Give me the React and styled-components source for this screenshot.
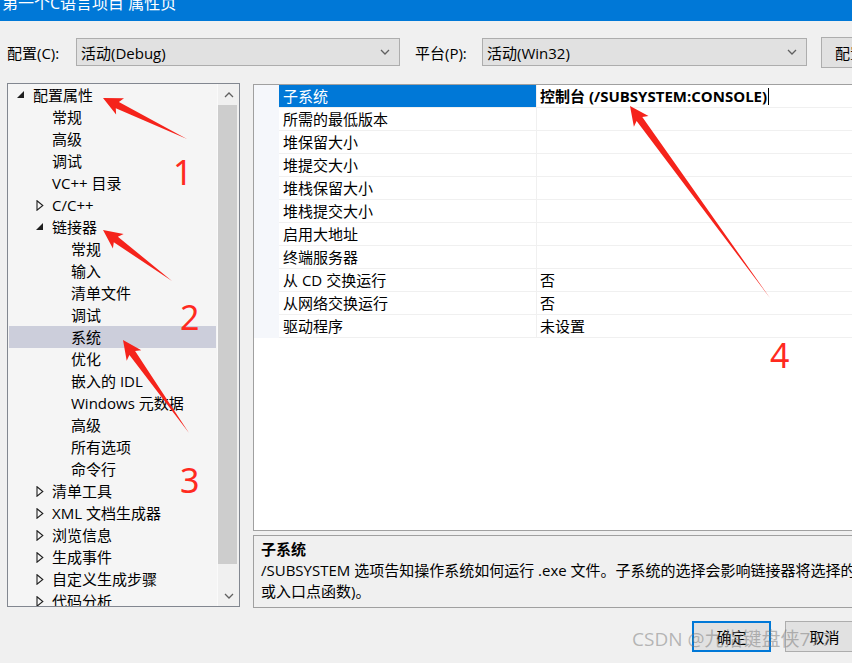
import React from "react";
import styled, { createGlobalStyle } from "styled-components";

const GlobalStyle = createGlobalStyle`
    html, body {
        margin: 0;
        padding: 0;
        background: #f0f0f0;
        overflow: hidden;
    }
    body {
        font-family: "Open Sans", "Noto Sans CJK SC", sans-serif;
    }
`;

const Window = styled.div`
    position: relative;
    width: 852px;
    height: 663px;
    overflow: hidden;
    background: #f0f0f0;
    display: flex;
    flex-direction: column;
    font-size: 15px;
    color: #000;
`;

const TitleBar = styled.div`
    height: 21px;
    flex-shrink: 0;
    background: #0078d7;
    color: #fff;
    font-size: 16px;
    line-height: 16px;
    padding-left: 2px;
    overflow: hidden;
    white-space: nowrap;
`;
const TitleText = styled.div`
    margin-top: -5px;
`;

const ConfigRow = styled.div`
    display: flex;
    align-items: center;
    height: 28px;
    padding: 17px 0 17px 7px;
    flex-shrink: 0;
    white-space: nowrap;
`;
const Label = styled.div`
    width: ${({ w }) => w}px;
    margin-left: ${({ ml }) => ml || 0}px;
    flex-shrink: 0;
`;
const Select = styled.div`
    width: ${({ w }) => w}px;
    height: 28px;
    box-sizing: border-box;
    border: 1px solid #adadad;
    background: #e1e1e1;
    display: flex;
    align-items: center;
    justify-content: space-between;
    padding: 0 9px 0 4px;
    flex-shrink: 0;
`;
const TopButton = styled.div`
    margin-left: 14px;
    width: 140px;
    height: 31px;
    box-sizing: border-box;
    border: 1px solid #adadad;
    background: #e1e1e1;
    display: flex;
    align-items: center;
    padding-left: 13px;
    flex-shrink: 0;
`;

const Main = styled.div`
    display: flex;
    align-items: flex-start;
    padding-left: 7px;
    height: 524px;
    flex-shrink: 0;
`;

const Tree = styled.div`
    width: 233px;
    height: 524px;
    box-sizing: border-box;
    border: 1px solid #828790;
    background: #f5f5f5;
    display: flex;
    flex-shrink: 0;
`;
const TreeList = styled.div`
    flex: 1;
    overflow: hidden;
    padding: 0 1px;
`;
const TreeRow = styled.div`
    display: flex;
    align-items: center;
    height: 22px;
    line-height: 22px;
    padding-left: ${({ level }) => 8 + level * 19}px;
    background: ${({ selected }) => (selected ? "#cccedb" : "transparent")};
    white-space: nowrap;
`;
const Expander = styled.span`
    width: 16px;
    height: 22px;
    display: flex;
    align-items: center;
    flex-shrink: 0;
`;

const ScrollBar = styled.div`
    width: 21px;
    background: #f0f0f0;
    display: flex;
    flex-direction: column;
    border-left: 1px solid #fafafa;
`;
const ScrollButton = styled.div`
    height: 21px;
    display: flex;
    align-items: center;
    justify-content: center;
`;
const Thumb = styled.div`
    height: 459px;
    margin-right: 2px;
    background: #cdcdcd;
`;
const Track = styled.div`
    flex: 1;
`;

const RightCol = styled.div`
    margin-left: 13px;
    margin-top: 1px;
    width: 720px;
    flex-shrink: 0;
    display: flex;
    flex-direction: column;
`;
const Grid = styled.div`
    height: 447px;
    box-sizing: border-box;
    border: 1px solid #a0a0a0;
    background: #fff;
`;
const GridRow = styled.div`
    display: flex;
    height: 23px;
    line-height: 22px;
    white-space: nowrap;
`;
const Gutter = styled.div`
    width: 25px;
    background: #f5f7fb;
    flex-shrink: 0;
`;
const NameCell = styled.div`
    width: 258px;
    box-sizing: border-box;
    padding-left: 4px;
    border-bottom: 1px solid #f0f0f0;
    border-right: 1px solid #f0f0f0;
    background: ${({ selected }) => (selected ? "#0078d7" : "#fff")};
    color: ${({ selected }) => (selected ? "#fff" : "#000")};
    flex-shrink: 0;
`;
const ValueCell = styled.div`
    flex: 1;
    padding-left: 3px;
    border-bottom: 1px solid #f0f0f0;
    font-weight: ${({ bold }) => (bold ? 700 : 400)};
    display: flex;
    align-items: center;
`;
const Caret = styled.span`
    width: 1px;
    height: 17px;
    margin-left: 1px;
    background: #000;
`;

const Description = styled.div`
    margin-top: 4px;
    height: 73px;
    box-sizing: border-box;
    border: 1px solid #a0a0a0;
    background: #f0f0f0;
    padding: 3px 7px;
    line-height: 21px;
    white-space: nowrap;
    overflow: hidden;
`;
const DescTitle = styled.div`
    font-weight: 700;
`;

const ButtonRow = styled.div`
    display: flex;
    gap: 14px;
    padding: 14px 0 0 692px;
`;
const Button = styled.div`
    width: 79px;
    height: 31px;
    box-sizing: border-box;
    border: ${({ primary }) => (primary ? "2px solid #0078d7" : "1px solid #adadad")};
    background: #e1e1e1;
    display: flex;
    align-items: center;
    justify-content: center;
    flex-shrink: 0;
`;

const Watermark = styled.div`
    position: absolute;
    left: 632px;
    top: 624px;
    font-size: 19px;
    color: rgba(120, 120, 120, 0.5);
    white-space: nowrap;
    pointer-events: none;
`;

const Overlay = styled.svg`
    position: absolute;
    left: 0;
    top: 0;
    pointer-events: none;
`;

const Chevron = ({ up }) => (
    <svg width="10" height="6" viewBox="0 0 10 6">
        <polyline
            points={up ? "1,5 5,1 9,5" : "1,1 5,5 9,1"}
            fill="none"
            stroke="#606060"
            strokeWidth="1.3"
        />
    </svg>
);

const Triangle = ({ open }) =>
    open ? (
        <svg width="8" height="8" viewBox="0 0 8 8">
            <polygon points="7,0 7,7 0,7" fill="#1e1e1e" />
        </svg>
    ) : (
        <svg width="8" height="11" viewBox="0 0 8 11">
            <polygon points="1,0.8 6.8,5.5 1,10.2" fill="none" stroke="#1e1e1e" strokeWidth="1.1" />
        </svg>
    );

const treeItems = [
    [0, "配置属性", "open"],
    [1, "常规"],
    [1, "高级"],
    [1, "调试"],
    [1, "VC++ 目录"],
    [1, "C/C++", "closed"],
    [1, "链接器", "open"],
    [2, "常规"],
    [2, "输入"],
    [2, "清单文件"],
    [2, "调试"],
    [2, "系统", null, true],
    [2, "优化"],
    [2, "嵌入的 IDL"],
    [2, "Windows 元数据"],
    [2, "高级"],
    [2, "所有选项"],
    [2, "命令行"],
    [1, "清单工具", "closed"],
    [1, "XML 文档生成器", "closed"],
    [1, "浏览信息", "closed"],
    [1, "生成事件", "closed"],
    [1, "自定义生成步骤", "closed"],
    [1, "代码分析", "closed"],
];

const props = [
    ["子系统", "控制台 (/SUBSYSTEM:CONSOLE)"],
    ["所需的最低版本", ""],
    ["堆保留大小", ""],
    ["堆提交大小", ""],
    ["堆栈保留大小", ""],
    ["堆栈提交大小", ""],
    ["启用大地址", ""],
    ["终端服务器", ""],
    ["从 CD 交换运行", "否"],
    ["从网络交换运行", "否"],
    ["驱动程序", "未设置"],
];

// tapered red annotation arrow, tail -> tip
function arrow(tx, ty, hx, hy) {
    const dx = hx - tx;
    const dy = hy - ty;
    const len = Math.hypot(dx, dy);
    const ux = dx / len;
    const uy = dy / len;
    const px = -uy;
    const py = ux;
    const bx = hx - ux * 16;
    const by = hy - uy * 16;
    const wx = hx - ux * 19;
    const wy = hy - uy * 19;
    const pts = [
        [hx, hy],
        [wx + px * 9, wy + py * 9],
        [bx + px * 3.5, by + py * 3.5],
        [tx, ty],
        [bx - px * 3.5, by - py * 3.5],
        [wx - px * 9, wy - py * 9],
    ];
    return pts.map((p) => p.map((v) => v.toFixed(1)).join(",")).join(" ");
}

const arrows = [
    [187, 139, 103, 98],
    [172, 281, 103, 230],
    [189, 433, 123, 340],
    [770, 298, 630, 106],
];
const numbers = [
    ["1", 173, 185],
    ["2", 180, 330],
    ["3", 180, 493],
    ["4", 770, 368],
];

export default function App() {
    return (
        <Window>
            <GlobalStyle />
            <TitleBar>
                <TitleText>第一个C语言项目 属性页</TitleText>
            </TitleBar>
            <ConfigRow>
                <Label w={69}>配置(C):</Label>
                <Select w={324}>
                    <span>活动(Debug)</span>
                    <Chevron />
                </Select>
                <Label w={67} ml={15}>平台(P):</Label>
                <Select w={325}>
                    <span>活动(Win32)</span>
                    <Chevron />
                </Select>
                <TopButton>配置管理器(O)...</TopButton>
            </ConfigRow>
            <Main>
                <Tree>
                    <TreeList>
                        {treeItems.map(([level, text, state, selected], i) => (
                            <TreeRow key={i} level={level} selected={selected}>
                                <Expander>{state && <Triangle open={state === "open"} />}</Expander>
                                {text}
                            </TreeRow>
                        ))}
                    </TreeList>
                    <ScrollBar>
                        <ScrollButton>
                            <Chevron up />
                        </ScrollButton>
                        <Thumb />
                        <Track />
                        <ScrollButton>
                            <Chevron />
                        </ScrollButton>
                    </ScrollBar>
                </Tree>
                <RightCol>
                    <Grid>
                        {props.map(([name, value], i) => (
                            <GridRow key={i}>
                                <Gutter />
                                <NameCell selected={i === 0}>{name}</NameCell>
                                <ValueCell bold={i === 0}>
                                    {value}
                                    {i === 0 && <Caret />}
                                </ValueCell>
                            </GridRow>
                        ))}
                    </Grid>
                    <Description>
                        <DescTitle>子系统</DescTitle>
                        <div>/SUBSYSTEM 选项告知操作系统如何运行 .exe 文件。子系统的选择会影响链接器将选择的入口点符号(</div>
                        <div>或入口点函数)。</div>
                    </Description>
                </RightCol>
            </Main>
            <ButtonRow>
                <Button primary>确定</Button>
                <Button>取消</Button>
            </ButtonRow>
            <Watermark>CSDN @九指键盘侠777</Watermark>
            <Overlay width="852" height="663" viewBox="0 0 852 663">
                {arrows.map((a, i) => (
                    <polygon key={i} points={arrow(...a)} fill="#f5231b" />
                ))}
                {numbers.map(([n, x, y]) => (
                    <text
                        key={n}
                        x={x}
                        y={y}
                        fill="#ff2a1f"
                        fontSize="34"
                        fontWeight="400"
                        fontFamily="'Noto Sans', sans-serif"
                    >
                        {n}
                    </text>
                ))}
            </Overlay>
        </Window>
    );
}
